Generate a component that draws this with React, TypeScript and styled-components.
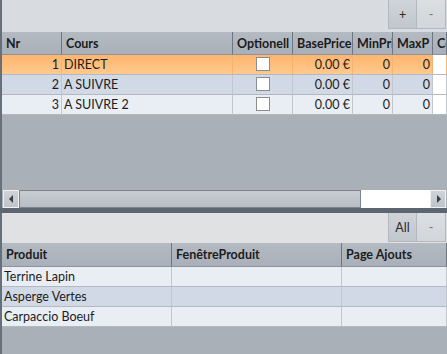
import React from "react";
import styled, { createGlobalStyle } from "styled-components";

const GlobalStyle = createGlobalStyle`
  html, body {
    margin: 0;
    padding: 0;
    background: #a9b0b8;
  }
  * {
    box-sizing: border-box;
  }
`;

const Screen = styled.div`
  width: 447px;
  height: 354px;
  display: flex;
  flex-direction: column;
  overflow: hidden;
  font-family: Lato, "Open Sans", sans-serif;
  font-size: 12.5px;
  color: #1c1c1c;
`;

const Pane = styled.div<{ $height?: number }>`
  display: flex;
  flex-direction: column;
  background: #a9b0b8;
  border-left: 2px solid #66707b;
  ${(p) => (p.$height ? `height: ${p.$height}px;` : "flex: 1;")}
  overflow: hidden;
`;

const Toolbar = styled.div<{ $height: number; $bg: string }>`
  height: ${(p) => p.$height}px;
  background: ${(p) => p.$bg};
  display: flex;
  justify-content: flex-end;
  align-items: flex-start;
  flex-shrink: 0;
  padding-right: 1px;
`;

const ToolButton = styled.button<{ $height: number }>`
  width: 29px;
  height: ${(p) => p.$height}px;
  border: 1px solid #b2b8bf;
  border-top: none;
  background: linear-gradient(#d0d4d9, #c2c7cd);
  font-family: inherit;
  font-size: 12.5px;
  color: #2a2a2a;
  padding: 0;
  & + & {
    border-left: none;
    background: linear-gradient(#dcdfe2, #d2d5d9);
    color: #777;
  }
`;

const Grid = styled.div<{ $cols: string }>`
  display: grid;
  grid-template-columns: ${(p) => p.$cols};
  flex-shrink: 0;
`;

const HeadCell = styled.div<{ $height: number }>`
  height: ${(p) => p.$height}px;
  background: linear-gradient(#b4bac2, #a9b0b9);
  border-right: 1px solid #6e7680;
  border-bottom: 1px solid #8d949d;
  font-weight: 700;
  display: flex;
  align-items: center;
  padding-left: 4px;
  white-space: nowrap;
  overflow: hidden;
`;

const Cell = styled.div<{ $tone: "sel" | "even" | "odd"; $align?: string; $white?: boolean }>`
  height: 20px;
  display: flex;
  align-items: center;
  justify-content: ${(p) => p.$align || "flex-start"};
  padding: 0 2px 1px 2px;
  white-space: nowrap;
  overflow: hidden;
  border-right: 1px solid ${(p) => (p.$tone === "sel" ? "#f0b476" : "#c2c7ce")};
  border-bottom: 1px solid #b4b9c0;
  background: ${(p) =>
    p.$white
      ? "#ffffff"
      : p.$tone === "sel"
      ? "linear-gradient(#ffb56d, #ffc98e)"
      : p.$tone === "even"
      ? "#d1d9e6"
      : "#e9edf4"};
`;

const Check = styled.span`
  width: 14px;
  height: 14px;
  background: #fff;
  border: 1px solid #8c8c8c;
`;

const Filler = styled.div`
  flex: 1;
`;

const ScrollBar = styled.div`
  height: 18px;
  display: flex;
  margin: 0 1px 0 1px;
  flex-shrink: 0;
`;

const ScrollArrow = styled.div`
  width: 16px;
  height: 18px;
  background: linear-gradient(#cfd3d8, #bfc4ca);
  border: 1px solid #eef0f2;
  display: flex;
  align-items: center;
  justify-content: center;
`;

const Thumb = styled.div`
  width: 342px;
  height: 18px;
  border: 1px solid #7c848e;
  background: linear-gradient(#c8ccd2, #b7bdc4);
`;

const Track = styled.div`
  flex: 1;
  background: #ffffff;
`;

const Splitter = styled.div`
  height: 5px;
  background: #5d6670;
  flex-shrink: 0;
`;

type Course = { nr: number; name: string };

const courses: Course[] = [
  { nr: 1, name: "DIRECT" },
  { nr: 2, name: "A SUIVRE" },
  { nr: 3, name: "A SUIVRE 2" },
];

const products = ["Terrine Lapin", "Asperge Vertes", "Carpaccio Boeuf"];

const toneFor = (i: number, selectFirst: boolean) =>
  selectFirst && i === 0 ? "sel" : i % 2 === 1 ? "even" : "odd";

const Arrow = ({ dir }: { dir: "left" | "right" }) => (
  <svg width="5" height="8" viewBox="0 0 5 8">
    <path d={dir === "left" ? "M4 0 L0 4 L4 8 Z" : "M1 0 L5 4 L1 8 Z"} fill="#3a3f45" />
  </svg>
);

export default function App() {
  return (
    <>
      <GlobalStyle />
      <Screen>
        <Pane $height={208}>
          <Toolbar $height={32} $bg="#d8dbdf">
            <ToolButton $height={29}>+</ToolButton>
            <ToolButton $height={29}>-</ToolButton>
          </Toolbar>
          <Grid $cols="60px 171px 60px 60px 40px 40px 14px">
            {["Nr", "Cours", "Optionell", "BasePrice", "MinPrice", "MaxP", "Cost"].map((h) => (
              <HeadCell key={h} $height={23}>
                {h}
              </HeadCell>
            ))}
            {courses.map((c, i) => {
              const t = toneFor(i, true);
              return (
                <React.Fragment key={c.nr}>
                  <Cell $tone={t} $align="flex-end">{c.nr}</Cell>
                  <Cell $tone={t}>{c.name}</Cell>
                  <Cell $tone={t} $align="center">
                    <Check />
                  </Cell>
                  <Cell $tone={t} $align="flex-end">0.00 €</Cell>
                  <Cell $tone={t} $align="flex-end">0</Cell>
                  <Cell $tone={t} $align="flex-end">0</Cell>
                  <Cell $tone={t} $white />
                </React.Fragment>
              );
            })}
          </Grid>
          <Filler />
          <ScrollBar>
            <ScrollArrow>
              <Arrow dir="left" />
            </ScrollArrow>
            <Thumb />
            <Track />
            <ScrollArrow>
              <Arrow dir="right" />
            </ScrollArrow>
          </ScrollBar>
        </Pane>
        <Splitter />
        <Pane>
          <Toolbar $height={30} $bg="#e0e1e3">
            <ToolButton $height={29}>All</ToolButton>
            <ToolButton $height={29}>-</ToolButton>
          </Toolbar>
          <Grid $cols="170px 170px 105px">
            {["Produit", "FenêtreProduit", "Page Ajouts"].map((h) => (
              <HeadCell key={h} $height={24}>
                {h}
              </HeadCell>
            ))}
            {products.map((p, i) => {
              const t = toneFor(i, false);
              return (
                <React.Fragment key={p}>
                  <Cell $tone={t}>{p}</Cell>
                  <Cell $tone={t} />
                  <Cell $tone={t} />
                </React.Fragment>
              );
            })}
          </Grid>
          <Filler />
        </Pane>
      </Screen>
    </>
  );
}
